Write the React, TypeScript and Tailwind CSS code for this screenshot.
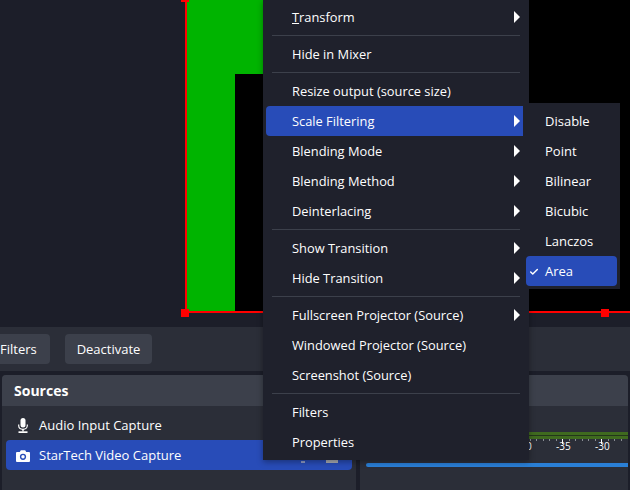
import React from "react";
import { Check } from "lucide-react";

const font = { fontFamily: '"Open Sans", sans-serif' };

function Arrow() {
  return (
    <svg width="6" height="12" viewBox="0 0 6 12" className="absolute right-[9px] top-[9px]">
      <path d="M0 0 L6 6 L0 12 Z" fill="#fefefe" />
    </svg>
  );
}

function MicIcon() {
  return (
    <svg width="10" height="15" viewBox="0 0 10 15" className="ml-[12px] mr-[11px] shrink-0">
      <rect x="2.5" y="0" width="5" height="9.5" rx="2.5" fill="#fefefe" />
      <path d="M0.7 6.5 V7.5 C0.7 10 2.6 11.3 5 11.3 C7.4 11.3 9.3 10 9.3 7.5 V6.5" fill="none" stroke="#fefefe" strokeWidth="1.2" />
      <rect x="4.3" y="11" width="1.4" height="2.5" fill="#fefefe" />
      <rect x="0.5" y="13.3" width="9" height="1.7" fill="#fefefe" />
    </svg>
  );
}

function CameraIcon() {
  return (
    <svg width="14" height="12" viewBox="0 0 14 12" className="ml-[10px] mr-[9px] shrink-0">
      <path d="M1 2 H3.8 L4.8 0.3 H9.2 L10.2 2 H13 A1 1 0 0 1 14 3 V11 A1 1 0 0 1 13 12 H1 A1 1 0 0 1 0 11 V3 A1 1 0 0 1 1 2 Z" fill="#fefefe" />
      <circle cx="7" cy="6.8" r="3.1" fill="#284cb8" />
      <circle cx="7" cy="6.8" r="1.7" fill="#fefefe" />
    </svg>
  );
}

function Item({ label, sub, active, u }: { label: string; sub?: boolean; active?: boolean; u?: boolean }) {
  return (
    <div className={`relative h-[30px] ml-[3px] pl-[26px] pt-[2px] flex items-center rounded-l-[4px] ${active ? "bg-[#284cb8]" : ""}`}>
      {u ? (
        <span><span className="underline">T</span>ransform</span>
      ) : (
        <span>{label}</span>
      )}
      {sub && <Arrow />}
    </div>
  );
}

function Sep() {
  return <div className="h-px bg-[#3c404b] ml-[9px] mr-[9px] my-[3px]" />;
}

function Ticks() {
  const xs = Array.from({ length: 18 }, (_, i) => 150 + i * 6.5);
  return (
    <svg width="270" height="8" viewBox="0 0 270 8" className="absolute left-0 top-[33px]">
      {xs.map((x, i) => (
        <rect key={i} x={Math.round(x)} y="0" width="1" height={i % 6 === 2 ? 5 : 2} fill={i % 6 === 2 ? "#fefefe" : "#8a8d94"} />
      ))}
    </svg>
  );
}

export default function App() {
  return (
    <div className="relative w-[630px] h-[490px] overflow-hidden bg-[#1c1e29] text-[13px] text-[#fefefe] flex flex-col" style={font}>
      {/* preview */}
      <div className="h-[327px] shrink-0 bg-[#1c1e29] flex items-start pl-[185px]">
        <div className="relative w-[445px] h-[313px] bg-black border-l-2 border-b-2 border-[#ff0000]">
          <div className="absolute left-0 top-0 w-[48px] h-[311px] bg-[#00b400]" />
          <div className="absolute left-[48px] top-0 w-[60px] h-[74px] bg-[#00b400]" />
          <div className="absolute left-[-6px] top-[-6px] w-2 h-2 bg-[#ff0000]" />
          <div className="absolute left-[-6px] bottom-[-6px] w-2 h-2 bg-[#ff0000]" />
          <div className="absolute left-[414px] bottom-[-6px] w-2 h-2 bg-[#ff0000]" />
        </div>
      </div>
      {/* toolbar */}
      <div className="h-[44px] shrink-0 bg-[#2b2e38] flex items-center gap-[15px]">
        <div className="w-[50px] h-[30px] pt-[2px] bg-[#3c404b] rounded-r-[4px] flex items-center">Filters</div>
        <div className="w-[87px] h-[30px] pt-[2px] bg-[#3c404b] rounded-[4px] flex items-center justify-center">Deactivate</div>
      </div>
      {/* docks */}
      <div className="flex-1 flex gap-[4px] pt-[4px] px-[2px] bg-[#1c1e29]">
        <div className="w-[354px] bg-[#2b2e38] rounded-t-[4px] flex flex-col">
          <div className="h-[31px] bg-[#3c404b] rounded-t-[4px] pl-[12px] flex items-center font-bold text-[14px]">Sources</div>
          <div className="px-[4px] pt-[4px]">
            <div className="h-[30px] flex items-center pt-px">
              <MicIcon />
              <span>Audio Input Capture</span>
            </div>
            <div className="relative h-[30px] bg-[#284cb8] rounded-[4px] flex items-center pt-[2px]">
              <CameraIcon />
              <span>StarTech Video Capture</span>
              <span className="absolute left-[295px] top-[21px] w-[4px] h-[2px] bg-[#8f9bc4]" />
              <span className="absolute left-[320px] top-[18px] w-[12px] h-[5px] bg-[#a9acb3]" />
            </div>
          </div>
        </div>
        <div className="flex-1 bg-[#2b2e38] rounded-t-[4px] flex flex-col">
          <div className="h-[31px] bg-[#3c404b] rounded-t-[4px]" />
          <div className="relative flex-1">
            <div className="absolute left-0 right-0 top-[26px] h-[7px] bg-[#3f6a1f] flex items-center">
              <div className="w-full h-px bg-[#24361a]" />
            </div>
            <Ticks />
            <div className="absolute left-[157px] top-[35px] text-[10px] leading-none">-40</div>
            <div className="absolute left-[196px] top-[35px] text-[10px] leading-none">-35</div>
            <div className="absolute left-[235px] top-[35px] text-[10px] leading-none">-30</div>
            <div className="absolute left-[6px] right-0 top-[57px] h-[4px] rounded-l-full bg-[#2a7fd5]" />
          </div>
        </div>
      </div>
      {/* main context menu */}
      <div className="absolute left-[263px] top-0 w-[266px] h-[460px] bg-[#1f212c] shadow-[0_2px_6px_rgba(0,0,0,0.35)] flex flex-col pt-[2px] text-[12.85px]">
        <Item label="Transform" u sub />
        <Sep />
        <Item label="Hide in Mixer" />
        <Sep />
        <Item label="Resize output (source size)" />
        <Item label="Scale Filtering" sub active />
        <Item label="Blending Mode" sub />
        <Item label="Blending Method" sub />
        <Item label="Deinterlacing" sub />
        <Sep />
        <Item label="Show Transition" sub />
        <Item label="Hide Transition" sub />
        <Sep />
        <Item label="Fullscreen Projector (Source)" sub />
        <Item label="Windowed Projector (Source)" />
        <Item label="Screenshot (Source)" />
        <Sep />
        <Item label="Filters" />
        <Item label="Properties" />
      </div>
      {/* submenu */}
      <div className="absolute left-[523px] top-[103px] w-[97px] h-[186px] bg-[#1f212c] p-[3px]">
        {["Disable", "Point", "Bilinear", "Bicubic", "Lanczos"].map((t) => (
          <div key={t} className="h-[30px] pl-[19px] pt-[2px] flex items-center">{t}</div>
        ))}
        <div className="relative h-[30px] pl-[19px] pt-[2px] flex items-center bg-[#284cb8] rounded-[4px]">
          <Check size={10} strokeWidth={3.5} className="absolute left-[3px] top-[11px]" />
          Area
        </div>
      </div>
    </div>
  );
}
